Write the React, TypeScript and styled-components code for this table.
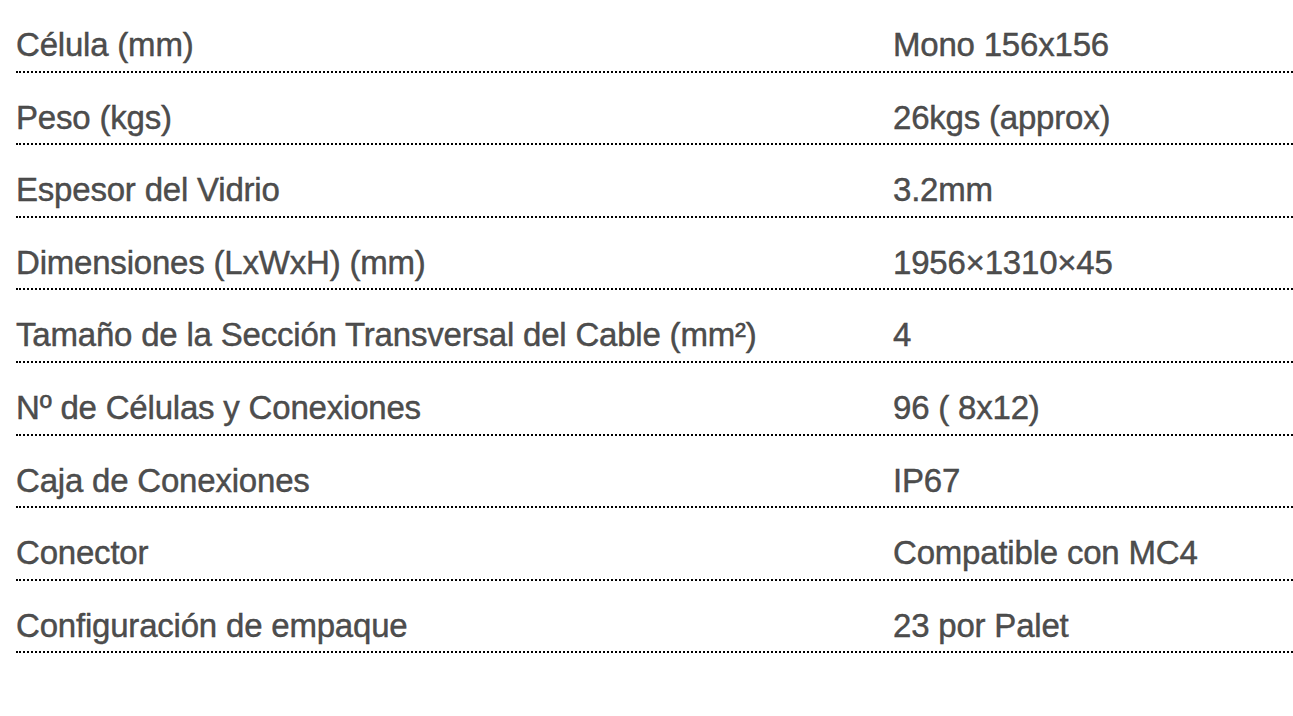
import React from "react";
import styled, { createGlobalStyle } from "styled-components";

const GlobalStyle = createGlobalStyle`
  body {
    margin: 0;
    background: #ffffff;
    font-family: "Liberation Sans", Arial, sans-serif;
  }
`;

const Wrapper = styled.div`
  padding-left: 16px;
`;

const SpecList = styled.dl`
  margin: 0;
`;

const Row = styled.div`
  display: grid;
  grid-template-columns: 877px 1fr;
  padding: 27px 0 7px;
  border-bottom: 2px dotted #000;
`;

const Cell = styled.dd`
  margin: 0;
  font-size: 33px;
  line-height: 36.6px;
  letter-spacing: -0.2px;
  color: #4e4e4e;
  -webkit-text-stroke: 0.4px #3c3c3c;
  white-space: nowrap;
`;

const Label = styled(Cell).attrs({ as: "dt" })``;

const specs: [string, string][] = [
  ["Célula (mm)", "Mono 156x156"],
  ["Peso (kgs)", "26kgs (approx)"],
  ["Espesor del Vidrio", "3.2mm"],
  ["Dimensiones (LxWxH) (mm)", "1956×1310×45"],
  ["Tamaño de la Sección Transversal del Cable (mm²)", "4"],
  ["Nº de Células y Conexiones", "96 ( 8x12)"],
  ["Caja de Conexiones", "IP67"],
  ["Conector", "Compatible con MC4"],
  ["Configuración de empaque", "23 por Palet"],
];

const App: React.FC = () => {
  return (
    <Wrapper>
      <GlobalStyle />
      <SpecList>
        {specs.map(([label, value]) => (
          <Row key={label}>
            <Label>{label}</Label>
            <Cell>{value}</Cell>
          </Row>
        ))}
      </SpecList>
    </Wrapper>
  );
};

export default App;
